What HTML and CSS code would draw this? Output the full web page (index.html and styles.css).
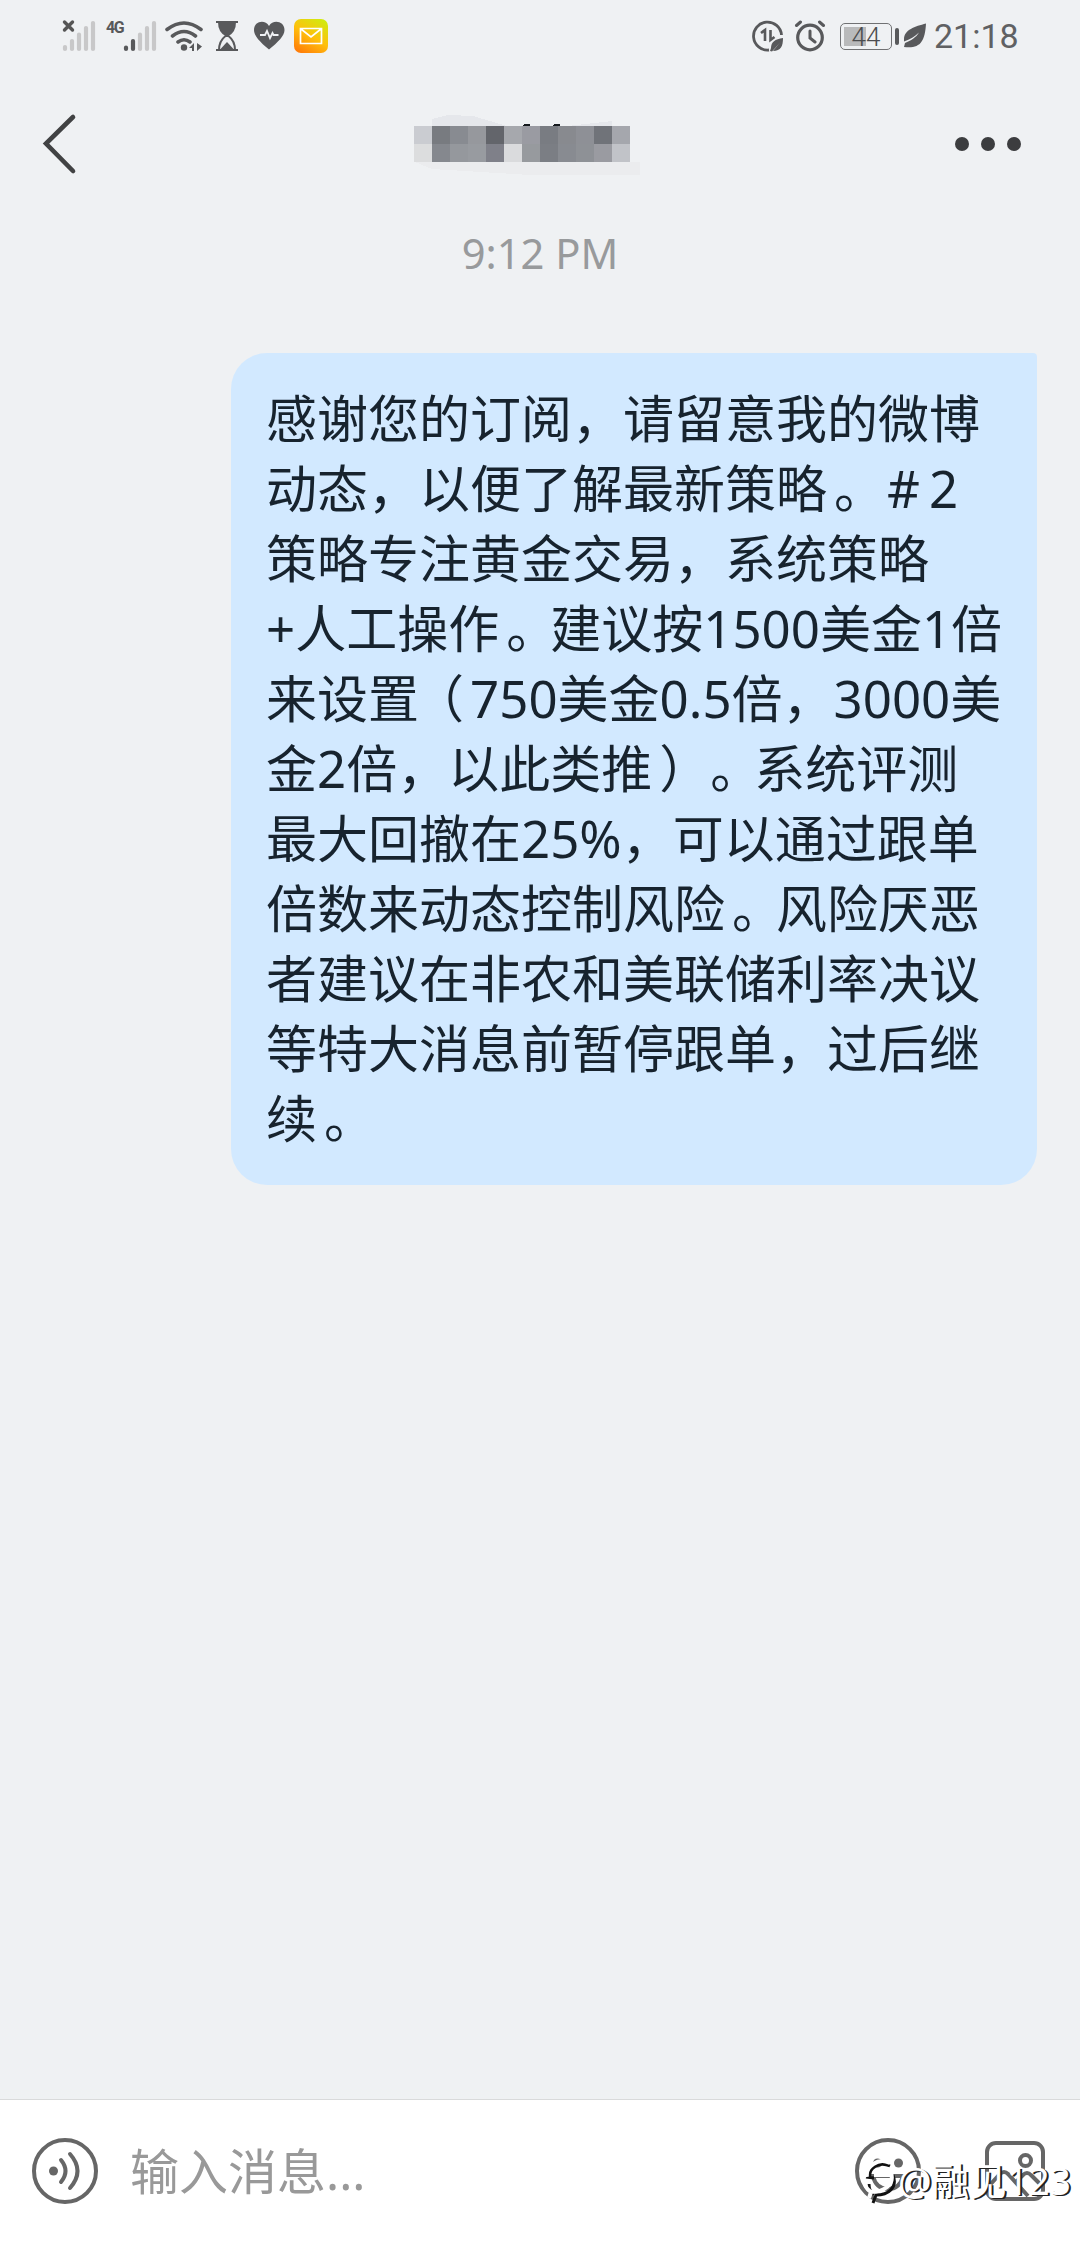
FILE: index.html
```html
<!DOCTYPE html>
<html lang="zh-CN">
<head>
    <meta charset="UTF-8">
    <meta name="viewport" content="width=device-width, initial-scale=1.0">
    <title>聊天</title>
    <link rel="stylesheet" href="styles.css">
</head>
<body>

<div class="page">
    <div class="status-bar">
        <div class="status-left">
            <svg width="34" height="34" viewBox="62 19 34 34">
                <path d="M64.5 22l8 8m0-8l-8 8" stroke="#555" stroke-width="3.4" stroke-linecap="round"/>
                <path d="M65 47v2M72 41v8M79 34.500v14.500M86 28v21M93 23v26" stroke="#c8c8c9" stroke-width="4.200" stroke-linecap="round"/>
            </svg>
            <div class="signal">
                <span class="network">4G</span>
                <svg width="34" height="34" viewBox="123 19 34 34">
                    <path d="M126 47.500v1.500M133 41v8" stroke="#58595b" stroke-width="4.200" stroke-linecap="round"/>
                    <path d="M140 34.500v14.500M147 28v21M154 23v26" stroke="#c8c8c9" stroke-width="4.200" stroke-linecap="round"/>
                </svg>
            </div>
            <svg class="wifi" width="38" height="34" viewBox="165 19 38 34">
                <path d="M167 29.500q17-13 34 0M172.500 36q11.500-9 23 0M178 42q6-4.500 12 0" fill="none" stroke="#58595b" stroke-width="3.600" stroke-linecap="round"/>
                <circle cx="184" cy="47.500" r="3.200" fill="#58595b"/>
                <path d="M194 43v8h-2v-3h-3zM197 43v8l5-4.500z" fill="#58595b"/>
            </svg>
            <svg class="hourglass" width="24" height="34" viewBox="215 19 24 34">
                <path d="M216 22h22M216 50h22" stroke="#58595b" stroke-width="2.200"/>
                <path d="M218 22h18q0 10-7.500 14h-3Q218 32 218 22z" fill="#58595b"/>
                <path d="M219 50q0-9 6.500-14h3Q235 41 235 50" fill="none" stroke="#58595b" stroke-width="2"/>
                <path d="M220.500 49l6.500-7 6.500 7z" fill="#58595b"/>
            </svg>
            <svg class="heart" width="32" height="30" viewBox="253 22 32 30">
                <path d="M269 50.500C260 43 254 37 254 31c0-9 11-11 15-4 4-7 15.500-5 15.500 4 0 6-6.500 12-15.500 19.500z" fill="#58595b"/>
                <path d="M260 36h5l2-4 3 7 2.500-5 1 2h5" fill="none" stroke="#eff1f3" stroke-width="1.800"/>
            </svg>
            <svg class="mail" width="34" height="34" viewBox="0 0 34 34">
                <defs>
                    <linearGradient id="mailBg" x1="0.200" y1="1" x2="0.800" y2="0">
                        <stop offset="0" stop-color="#ff7d08"/>
                        <stop offset="0.500" stop-color="#ffc00c"/>
                        <stop offset="1" stop-color="#d1ea10"/>
                    </linearGradient>
                </defs>
                <rect width="34" height="34" rx="7" fill="url(#mailBg)"/>
                <path d="M6.500 9.500h21v15h-21zM7 10l10 8 10-8" fill="none" stroke="#fff" stroke-width="1.700"/>
            </svg>
        </div>
        <div class="status-right">
            <svg width="32" height="32" viewBox="752 20 32 32">
                <path d="M769 50a14 14 0 1 1 12.500-15" fill="none" stroke="#58595b" stroke-width="2.800"/>
                <path d="M761 33l4-3v11M770.500 30v10l4-3" fill="none" stroke="#58595b" stroke-width="2.600"/>
                <path d="M783 38c-8 1-12 4-12 10l-1 3 2 .5 8-9-7 8.500c8 0 10-5 10-13z" fill="#58595b"/>
            </svg>
            <svg class="alarm" width="32" height="32" viewBox="794 20 32 32">
                <circle cx="810" cy="37.500" r="12.300" fill="none" stroke="#58595b" stroke-width="3.200"/>
                <path d="M796.500 25.500l4-3.500M823.500 25.500l-4-3.500M810 31v7l5 4" fill="none" stroke="#58595b" stroke-width="3" stroke-linecap="round"/>
            </svg>
            <div class="battery"><span class="battery-level"></span><span class="battery-text">44</span></div>
            <svg class="leaf" width="24" height="26" viewBox="904 22 24 26">
                <path d="M927 23.500c-11 3-22 6-22 16v2c6-2 11-5 15-9-3 5-8 8-14 10.500l-1 4c16 2 21-5 22-23.500z" fill="#58595b"/>
            </svg>
            <span class="clock">21:18</span>
        </div>
    </div>

    <div class="nav-bar">
        <svg class="back" width="36" height="62" viewBox="42 113 36 62">
            <path d="M73 117L46 143.500 73 171" fill="none" stroke="#414243" stroke-width="4.600" stroke-linecap="round"/>
        </svg>
        <!-- blurred out contact name -->
        <svg class="contact" width="260" height="64" viewBox="400 112 260 64" shape-rendering="crispEdges">
            <path d="M432 126v-7l16-4 25 1 34 10zM567 126l45-5v5z" fill="#e5e7eb"/>
            <path d="M415 162h225v13h-110l-98-6z" fill="#ebecee"/>
            <path d="M522 127l2-3h6v3zM552 127l2-3h6v3z" fill="#15191d"/>
            <path d="M414 126h18v18h-18z" fill="#caccd1"/>
            <path d="M432 126h18v18h-18z" fill="#787b80"/>
            <path d="M450 126h18v18h-18z" fill="#888b91"/>
            <path d="M468 126h18v18h-18z" fill="#96989d"/>
            <path d="M486 126h18v18h-18z" fill="#63656b"/>
            <path d="M504 126h18v18h-18z" fill="#a6a8ad"/>
            <path d="M522 126h18v18h-18z" fill="#9a9ba2"/>
            <path d="M540 126h18v18h-18z" fill="#797c82"/>
            <path d="M558 126h18v18h-18z" fill="#888a8f"/>
            <path d="M576 126h18v18h-18z" fill="#8e9096"/>
            <path d="M594 126h18v18h-18z" fill="#707379"/>
            <path d="M612 126h18v18h-18z" fill="#a5a7ad"/>
            <path d="M414 144h18v18h-18z" fill="#dcddde"/>
            <path d="M432 144h18v18h-18z" fill="#85888e"/>
            <path d="M450 144h18v18h-18z" fill="#95989d"/>
            <path d="M468 144h18v18h-18z" fill="#989ba0"/>
            <path d="M486 144h18v18h-18z" fill="#7f8089"/>
            <path d="M504 144h18v18h-18z" fill="#dadbdd"/>
            <path d="M522 144h18v18h-18z" fill="#979a9e"/>
            <path d="M540 144h18v18h-18z" fill="#7b7e84"/>
            <path d="M558 144h18v18h-18z" fill="#888b91"/>
            <path d="M576 144h18v18h-18z" fill="#8e9196"/>
            <path d="M594 144h18v18h-18z" fill="#9a9ba1"/>
            <path d="M612 144h18v18h-18z" fill="#c1c3c8"/>
        </svg>
        <div class="more"><i></i><i></i><i></i></div>
    </div>

    <div class="chat">
        <div class="time">9:12 PM</div>
        <div class="bubble">感谢您的订阅，请留意我的微博<br>
            动态，以便了解最新策略<span class="stop">。</span><span class="hash">#</span>2<br>
            策略专注黄金交易，系统策略<br>
            +人工操作<span class="stop">。</span>建议按1500美金1倍<br>
            来设置<span class="open">（</span>750美金0.5倍，3000美<br>
            金2倍，以此类推<span class="stop">）</span><span class="stop">。</span>系统评测<br>
            最大回撤在25%，可以通过跟单<br>
            倍数来动态控制风险<span class="stop">。</span>风险厌恶<br>
            者建议在非农和美联储利率决议<br>
            等特大消息前暂停跟单，过后继<br>
            续<span class="stop">。</span></div>
    </div>

    <div class="input-bar">
        <svg width="66" height="66" viewBox="32 2138 66 66" fill="none" stroke="#666" stroke-width="4">
            <circle cx="65" cy="2171" r="31"/>
            <circle cx="53.500" cy="2171" r="4.500" fill="#666" stroke="none"/>
            <path d="M61 2160q9 11 0 22M70 2154q15 17 0 34" stroke-linecap="round"/>
        </svg>
        <div class="placeholder">输入消息...</div>
        <svg class="smile" width="66" height="66" viewBox="855 2138 66 66" fill="none" stroke="#666" stroke-width="4">
            <circle cx="888" cy="2171" r="31"/>
            <path d="M873 2176q3 13 15 13t15-13z"/>
            <circle cx="877.500" cy="2163" r="4.500" fill="#666" stroke="none"/>
            <circle cx="898.500" cy="2163" r="4.500" fill="#666" stroke="none"/>
        </svg>
        <svg class="photo" width="62" height="62" viewBox="984 2140 62 62" fill="none" stroke="#666" stroke-width="4">
            <rect x="987" y="2143" width="56" height="56" rx="9"/>
            <circle cx="1025.500" cy="2160.500" r="5.500"/>
            <path d="M988 2187l12-13q4-4 8 0l20 22M1015 2183l8-8q4-4 8 0l11 11"/>
        </svg>
        <div class="watermark">
            <svg width="38" height="46" viewBox="858 2162 38 46" fill="none">
                <path d="M868 2182C866 2172 877 2165 888 2170M864 2181l8 1M891 2179c5 13-5 20-17 20l-3 8M867 2188q0 8 5 11" stroke="#111" stroke-width="3"/>
                <path d="M865 2181C863 2171 876 2161 888 2167M872 2179h18M889 2177c4 12-8 19-20 19l-2 6M863 2186q0 6 5 9" stroke="#fff" stroke-width="4"/>
            </svg>
            <span>@融见123</span>
        </div>
    </div>
</div>

</body>
</html>
```
FILE: styles.css
```css
body {
    margin: 0;
    background-color: #eff1f3;
    font-family: "Noto Sans", "Noto Sans CJK SC", sans-serif;
}
svg {
    display: block;
    flex-shrink: 0;
}
.page {
    width: 1080px;
    height: 2244px;
    display: flex;
    flex-direction: column;
    overflow: hidden;
}
.status-bar {
    height: 72px;
    display: flex;
    justify-content: space-between;
    box-sizing: border-box;
    padding: 0 62px;
}
.status-left,
.status-right {
    display: flex;
    align-items: center;
}
.signal {
    display: flex;
    margin-left: 10px;
}
.network {
    width: 17px;
    font: bold 16px/18px Roboto, sans-serif;
    letter-spacing: -1.500px;
    color: #58595b;
}
.wifi {
    margin-left: 8px;
}
.hourglass {
    margin-left: 12px;
}
.heart {
    margin-left: 14px;
}
.mail {
    margin-left: 9px;
}
.alarm {
    margin-left: 10px;
}
.battery {
    position: relative;
    width: 52px;
    height: 27px;
    box-sizing: border-box;
    margin: 0 11px 0 14px;
    border: 1.500px solid #707173;
    border-radius: 5px;
    text-align: center;
}
.battery::after {
    content: "";
    position: absolute;
    right: -8px;
    top: 4px;
    width: 4px;
    height: 17px;
    border-radius: 2px;
    background-color: #58595b;
}
.battery-level {
    position: absolute;
    left: 3px;
    top: 3px;
    width: 22px;
    height: 19px;
    background-color: #b9babb;
}
.battery-text {
    position: relative;
    display: block;
    font: 300 26px/26px Roboto, sans-serif;
    color: #4c4d4f;
}
.leaf {
    margin-bottom: 2px;
}
.clock {
    width: 84px;
    margin-left: 7px;
    font: 34px/74px Roboto, sans-serif;
    color: #606163;
    white-space: nowrap;
}
.nav-bar {
    height: 144px;
    display: flex;
    align-items: center;
    box-sizing: border-box;
    padding: 0 59px 0 42px;
}
.contact {
    margin-left: 322px;
}
.more {
    display: flex;
    gap: 12px;
    margin-left: auto;
}
.more i {
    width: 14px;
    height: 14px;
    border-radius: 50%;
    background-color: #3c3d3f;
}
.chat {
    flex: 1;
}
.time {
    height: 137px;
    font-size: 41.700px;
    line-height: 74px;
    text-align: center;
    color: #989a9c;
}
.bubble {
    width: 806px;
    height: 832px;
    box-sizing: border-box;
    margin-left: 231px;
    padding: 30px 0 0 35px;
    border-radius: 36px 4px 36px 36px;
    background-color: #d2e9ff;
    color: #17232e;
    font-size: 51px;
    line-height: 70px;
    white-space: nowrap;
    text-spacing-trim: space-all;
}
/* half-width punctuation, padded back out to a full square */
.stop,
.open {
    font-feature-settings: "halt";
}
.stop {
    margin: 0 18.500px 0 7px;
}
.open {
    margin: 0 6px 0 19.500px;
}
.hash {
    display: inline-block;
    width: 51px;
    text-align: center;
}
.input-bar {
    position: relative;
    height: 145px;
    display: flex;
    align-items: center;
    box-sizing: border-box;
    padding: 0 34px 2px 32px;
    border-top: 1px solid #d9dadb;
    background-color: #fff;
}
.placeholder {
    flex: 1;
    margin-left: 32px;
    font-size: 49px;
    line-height: 70px;
    color: #999;
}
.photo {
    margin-left: 63px;
}
.watermark {
    position: absolute;
    left: 860px;
    bottom: 38px;
    display: flex;
    align-items: center;
    color: #fff;
    font-size: 37.500px;
    line-height: 50px;
    white-space: nowrap;
    text-shadow: 2px 1px 0 #222;
}
```
